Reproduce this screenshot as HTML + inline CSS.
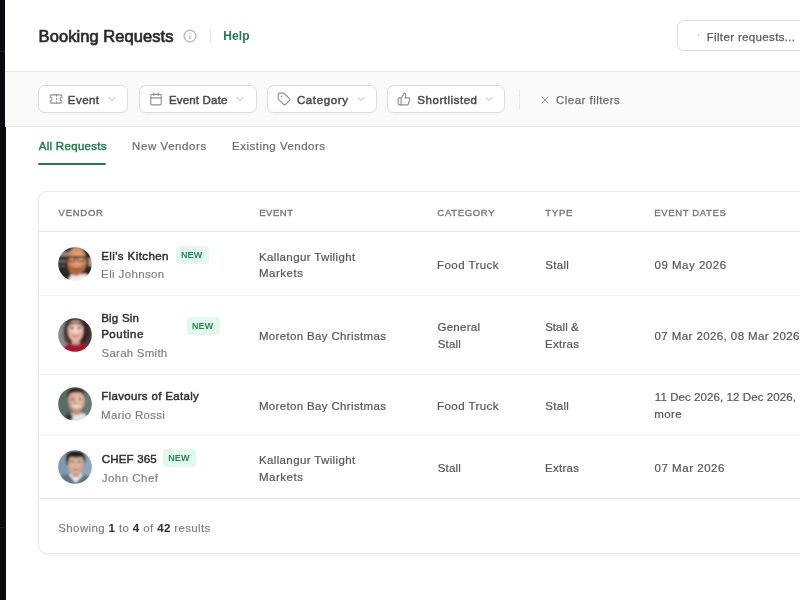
<!DOCTYPE html>
<html lang="en">
<head>
<meta charset="utf-8">
<title>Booking Requests</title>
<style>
*{box-sizing:border-box;margin:0;padding:0}
html,body{width:800px;height:600px;overflow:hidden;background:#fff}
body{font-family:"Liberation Sans",sans-serif;color:#333;position:relative}
.abs,.t{position:absolute;white-space:nowrap}
.t b{color:#2e2e2e}
#tl{position:absolute;left:0;top:0;width:800px;height:600px;will-change:transform}
.side{position:absolute;left:0;top:0;width:5.5px;height:600px;background:#0b0b0d}
.hdr{position:absolute;left:5px;top:0;width:795px;height:72px;background:#fff;border-bottom:1px solid #e7e7e7}
.fbar{position:absolute;left:5px;top:72px;width:795px;height:55px;background:#fafafa;border-bottom:1px solid #e9e9e9}
.btn{position:absolute;top:85px;height:28px;background:#fff;border:1px solid #dedede;border-radius:7px;box-shadow:0 1px 2px rgba(0,0,0,.04)}
.card{position:absolute;left:38px;top:191px;width:800px;height:363px;border:1px solid #e9e9e9;border-radius:9px;background:#fff;box-shadow:0 1px 2px rgba(0,0,0,.03)}
.hl{position:absolute;left:39px;width:761px;height:1px;background:#f3f3f3}
.new{position:absolute;height:18px;width:33px;border-radius:4px;background:#e4f9ed}
.av{position:absolute;left:58px;width:34px;height:34px;border-radius:50%;overflow:hidden}
svg{position:absolute;overflow:visible}
.ic{fill:none;stroke:#8e8e8e;stroke-width:1.9;stroke-linecap:round;stroke-linejoin:round}
.ch{fill:none;stroke:#b4b4b4;stroke-width:2;stroke-linecap:round;stroke-linejoin:round}
</style>
</head>
<body>
<div class="side"></div>
<div class="abs" style="left:0;top:51px;width:5px;height:1px;background:#1d1d20"></div>
<div class="abs" style="left:0;top:527px;width:5px;height:1px;background:#1d1d20"></div>
<div class="hdr"></div>
<div class="fbar"></div>

<!-- header icons -->
<svg style="left:182.5px;top:28.5px" width="14" height="14" viewBox="0 0 14 14"><circle cx="7" cy="7" r="5.9" fill="none" stroke="#b3b3b3" stroke-width="1.2"/><rect x="6.4" y="6.3" width="1.2" height="3.6" rx=".5" fill="#b3b3b3"/><circle cx="7" cy="4.4" r=".75" fill="#b3b3b3"/></svg>
<div class="abs" style="left:209.5px;top:28.5px;width:1px;height:13px;background:#e4e4e4"></div>
<div class="abs" style="left:677px;top:20px;width:140px;height:31px;border:1px solid #dcdcdc;border-radius:7px;background:#fff;box-shadow:0 1px 2px rgba(0,0,0,.03)"></div>
<div class="abs" style="left:697.5px;top:34px;width:1.5px;height:1.5px;border-radius:50%;background:#bbb"></div>

<!-- filter buttons -->
<div class="btn" style="left:38px;width:90px"></div>
<div class="btn" style="left:138.5px;width:118px"></div>
<div class="btn" style="left:267px;width:109.5px"></div>
<div class="btn" style="left:387px;width:118px"></div>
<div class="abs" style="left:519px;top:89px;width:1px;height:20px;background:#e9e9e9"></div>

<!-- ticket -->
<svg style="left:48.8px;top:92.2px" width="14" height="14" viewBox="0 0 24 24"><path class="ic" d="M2 9a3 3 0 0 1 0 6v2a2 2 0 0 0 2 2h16a2 2 0 0 0 2-2v-2a3 3 0 0 1 0-6V7a2 2 0 0 0-2-2H4a2 2 0 0 0-2 2Z"/><path class="ic" d="M13 5v2M13 17v2M13 11v2"/></svg>
<!-- calendar -->
<svg style="left:148.9px;top:92px" width="14" height="14" viewBox="0 0 24 24"><path class="ic" d="M8 2v4M16 2v4M3 10h18"/><rect class="ic" x="3" y="4" width="18" height="18" rx="2"/></svg>
<!-- tag -->
<svg style="left:277.3px;top:92px" width="14" height="14" viewBox="0 0 24 24"><path class="ic" d="M12.586 2.586A2 2 0 0 0 11.172 2H4a2 2 0 0 0-2 2v7.172a2 2 0 0 0 .586 1.414l8.704 8.704a2.426 2.426 0 0 0 3.42 0l6.58-6.58a2.426 2.426 0 0 0 0-3.42z"/><circle cx="7.5" cy="7.5" r="1" fill="#8e8e8e" stroke="#8e8e8e" stroke-width=".6"/></svg>
<!-- thumbs up -->
<svg style="left:396.9px;top:92px" width="14" height="14" viewBox="0 0 24 24"><path class="ic" d="M7 10v12M15 5.88 14 10h5.830a2 2 0 0 1 1.920 2.560l-2.330 8A2 2 0 0 1 17.500 22H4a2 2 0 0 1-2-2v-8a2 2 0 0 1 2-2h2.760a2 2 0 0 0 1.790-1.110L12 2a3.130 3.130 0 0 1 3 3.880Z"/></svg>
<!-- chevrons -->
<svg style="left:105.9px;top:92.7px" width="12" height="12" viewBox="0 0 24 24"><path class="ch" d="m6 9 6 6 6-6"/></svg>
<svg style="left:234.3px;top:92.7px" width="12" height="12" viewBox="0 0 24 24"><path class="ch" d="m6 9 6 6 6-6"/></svg>
<svg style="left:354.9px;top:92.7px" width="12" height="12" viewBox="0 0 24 24"><path class="ch" d="m6 9 6 6 6-6"/></svg>
<svg style="left:483px;top:92.7px" width="12" height="12" viewBox="0 0 24 24"><path class="ch" d="m6 9 6 6 6-6"/></svg>
<!-- x -->
<svg style="left:539.25px;top:93.5px" width="12" height="12" viewBox="0 0 24 24"><path d="M18 6 6 18M6 6l12 12" fill="none" stroke="#949494" stroke-width="2" stroke-linecap="round"/></svg>

<!-- tabs underline -->
<div class="abs" style="left:38px;top:163px;width:68px;height:2px;background:#27794b;border-radius:1px"></div>

<!-- table -->
<div class="card"></div>
<div class="hl" style="top:231px;background:#e6e6e6"></div>
<div class="hl" style="top:295px"></div>
<div class="hl" style="top:374px"></div>
<div class="hl" style="top:435px"></div>
<div class="hl" style="top:498px;background:#e6e6e6"></div>

<!-- badges -->
<div class="new" style="left:175.5px;top:246px"></div>
<div class="new" style="left:186.5px;top:316.5px"></div>
<div class="new" style="left:163px;top:449px"></div>

<svg width="0" height="0" style="left:0;top:0"><defs>
<filter id="bl" x="-10%" y="-10%" width="120%" height="120%"><feGaussianBlur stdDeviation=".8"/></filter>
<clipPath id="cc"><circle cx="17" cy="17" r="16.8"/></clipPath>
<radialGradient id="f1" cx=".55" cy=".4" r=".65"><stop offset="0" stop-color="#e8ae88"/><stop offset=".65" stop-color="#d68a60"/><stop offset="1" stop-color="#a9633d"/></radialGradient>
<radialGradient id="f2" cx=".5" cy=".45" r=".6"><stop offset="0" stop-color="#f3d5c6"/><stop offset=".75" stop-color="#e6bba9"/><stop offset="1" stop-color="#c49482"/></radialGradient>
<radialGradient id="f3" cx=".58" cy=".45" r=".62"><stop offset="0" stop-color="#e8c4ab"/><stop offset=".7" stop-color="#d6ab91"/><stop offset="1" stop-color="#9f7a66"/></radialGradient>
<radialGradient id="f4" cx=".5" cy=".5" r=".6"><stop offset="0" stop-color="#e3beab"/><stop offset=".7" stop-color="#d3a995"/><stop offset="1" stop-color="#a98373"/></radialGradient>
</defs></svg>
<!-- avatar 1 -->
<svg style="left:58.2px;top:246.6px" width="34" height="34" viewBox="0 0 34 34"><g clip-path="url(#cc)"><g filter="url(#bl)">
<rect x="-2" y="-2" width="38" height="38" fill="#262b27"/>
<rect x="-2" y="4.500" width="13" height="5" fill="#858a85"/>
<rect x="-2" y="13" width="10" height="2.500" fill="#6a6f6a"/>
<rect x="-2" y="18" width="9" height="2" fill="#4a4f4b"/>
<rect x="30.500" y="11" width="5" height="8" fill="#b8a09a"/>
<path d="M9 36 L13 27.500 L28 27 L34 31 L34 36Z" fill="#eeedea"/>
<ellipse cx="18.800" cy="14" rx="9.600" ry="14.200" fill="url(#f1)"/>
<path d="M10 16.500 Q10.500 28.500 18 29 Q25.500 28.500 26.500 16.500 Q22.500 21 18.500 20.500 Q14 21 10 16.500Z" fill="#b4683c"/>
<path d="M14.500 21.800 Q18.300 23.300 22 21.800" stroke="#8a4a2a" stroke-width="1" fill="none"/>
<rect x="8" y="9.200" width="20.500" height="1.700" fill="#2a1c16"/>
<rect x="10.300" y="10" width="6.800" height="4.200" rx="1.500" fill="none" stroke="#35251c" stroke-width="1.100"/>
<rect x="19.500" y="10" width="6.800" height="4.200" rx="1.500" fill="none" stroke="#35251c" stroke-width="1.100"/>
</g></g></svg>
<!-- avatar 2 -->
<svg style="left:58.2px;top:317.600px" width="34" height="34" viewBox="0 0 34 34"><g clip-path="url(#cc)"><g filter="url(#bl)">
<rect x="-2" y="-2" width="38" height="38" fill="#8d8c8b"/>
<rect x="24" y="-2" width="12" height="38" fill="#4a3b37"/>
<ellipse cx="18.500" cy="13" rx="13" ry="15.500" fill="#35252a"/>
<ellipse cx="9" cy="16" rx="3.500" ry="9" fill="#4a3a3a"/>
<path d="M4 36 Q5 26 12 25.500 L24 25.500 Q30 26 31 36Z" fill="#a5152d"/>
<rect x="14" y="21" width="7.500" height="5.500" fill="#d8a997"/>
<path d="M10 12 Q9.500 2.500 17.600 2.500 Q25.500 2.500 25.300 12 Q25 19.500 21 23 Q17.600 25.500 14.500 23 Q10.300 19.500 10 12Z" fill="url(#f2)"/>
<path d="M10 9 Q12 3 18 4.500 Q23 3 25.300 9 Q22 5.500 17.600 6 Q13 5.500 10 9Z" fill="#5a3d38"/>
<ellipse cx="14" cy="10" rx="1.800" ry=".9" fill="#2e2022"/>
<ellipse cx="21.300" cy="10" rx="1.800" ry=".9" fill="#2e2022"/>
<path d="M12.500 15.800 Q17.600 23 22.800 15.800 Q17.600 18 12.500 15.800Z" fill="#bf2437"/>
<path d="M13.800 16.700 Q17.600 18.300 21.500 16.700 Q17.600 20 13.800 16.700Z" fill="#f7efee"/>
</g></g></svg>
<!-- avatar 3 -->
<svg style="left:58.2px;top:387.400px" width="34" height="34" viewBox="0 0 34 34"><g clip-path="url(#cc)"><g filter="url(#bl)">
<rect x="-2" y="-2" width="38" height="38" fill="#586b65"/>
<rect x="26" y="-2" width="10" height="38" fill="#667a73"/>
<path d="M5 36 Q7 27 13 26 L24 26 Q30 27 31 36Z" fill="#dfe5ea"/>
<path d="M4 36 Q6 27 12.500 25.500 L15 30 L12 36Z" fill="#33373d"/>
<rect x="14.500" y="22" width="7.500" height="6" fill="#c0957d"/>
<path d="M10 13 Q9.500 3 18.200 3 Q27 3 26.600 13 Q26.300 21 22 24.500 Q18.200 27 14.500 24.500 Q10.300 21 10 13Z" fill="url(#f3)"/>
<path d="M9.300 12 Q8 .8 18 .8 Q28 .8 27.200 12 Q26 6.500 22 5.500 Q18 4.800 14 5.800 Q10.500 7 9.300 12Z" fill="#2f241f"/>
<ellipse cx="14.600" cy="12.200" rx="1.700" ry=".8" fill="#3f3029"/>
<ellipse cx="22" cy="12.200" rx="1.700" ry=".8" fill="#3f3029"/>
<path d="M17.500 13 L17 16.500 L19.500 16.500" stroke="#b58a72" stroke-width=".8" fill="none"/>
<path d="M13.500 18 Q18.200 23 23.200 18 Q18.200 19.500 13.500 18Z" fill="#f6f1f0"/>
<path d="M12.500 21.500 Q18 27 24.500 21.500 Q18 25 12.500 21.500Z" fill="#a97f69"/>
</g></g></svg>
<!-- avatar 4 -->
<svg style="left:58.2px;top:450.200px" width="34" height="34" viewBox="0 0 34 34"><g clip-path="url(#cc)"><g filter="url(#bl)">
<rect x="-2" y="-2" width="38" height="38" fill="#8da6b8"/>
<rect x="-2" y="-2" width="12" height="38" fill="#7f9aae"/>
<path d="M-2 36 L-2 29 Q6 24 12 24 L24 24 Q30 25 36 30 L36 36Z" fill="#5f7485"/>
<path d="M11 25 L17.800 33 L25 25 L22 23 L14 23Z" fill="#e8ecf0"/>
<rect x="14.300" y="21" width="7.200" height="6" fill="#c29684"/>
<path d="M10.200 13 Q9.800 3.500 17.800 3.500 Q25.800 3.500 25.500 13 Q25.200 20.500 21.500 24 Q17.800 26.500 14.300 24 Q10.500 20.500 10.200 13Z" fill="url(#f4)"/>
<path d="M8.500 14.500 Q5 .8 17 .8 Q29.500 .3 27.300 14 Q26.500 9.500 24 6.800 Q18 8.300 12.500 6.800 Q10 9 9.800 15Z" fill="#221b1b"/>
<ellipse cx="14.300" cy="11.500" rx="1.900" ry=".8" fill="#4a362e"/>
<ellipse cx="21.300" cy="11.500" rx="1.900" ry=".8" fill="#4a362e"/>
<path d="M17.500 12.500 L17.200 16 L19 16" stroke="#b48a78" stroke-width=".8" fill="none"/>
<path d="M14.800 19 Q17.800 20.500 21 19" stroke="#9c5f55" stroke-width="1.100" fill="none"/>
</g></g></svg>


<div id="tl">
<div class="t" id="title" style="left:38.58px;top:24.88px;font-size:16.5px;line-height:22px;color:#2b2b2b;letter-spacing:0.067px;-webkit-text-stroke:.7px #2b2b2b;">Booking Requests</div>
<div class="t" id="help" style="left:223.21px;top:28.34px;font-size:12px;line-height:16px;color:#1f7d49;font-weight:bold;letter-spacing:0.099px;">Help</div>
<div class="t" id="filt" style="left:706.70px;top:30.02px;font-size:11.5px;line-height:15px;color:#5a5a5a;letter-spacing:0.349px;-webkit-text-stroke:.25px #5a5a5a;">Filter requests...</div>
<div class="t" id="b1" style="left:67.87px;top:92.52px;font-size:11.5px;line-height:15px;color:#484848;letter-spacing:0.433px;-webkit-text-stroke:.45px #484848;">Event</div>
<div class="t" id="b2" style="left:168.92px;top:92.52px;font-size:11.5px;line-height:15px;color:#484848;letter-spacing:0.181px;-webkit-text-stroke:.45px #484848;">Event Date</div>
<div class="t" id="b3" style="left:296.89px;top:92.52px;font-size:11.5px;line-height:15px;color:#484848;letter-spacing:0.632px;-webkit-text-stroke:.45px #484848;">Category</div>
<div class="t" id="b4" style="left:417.32px;top:92.52px;font-size:11.5px;line-height:15px;color:#484848;letter-spacing:0.536px;-webkit-text-stroke:.45px #484848;">Shortlisted</div>
<div class="t" id="clear" style="left:556.07px;top:92.52px;font-size:11.5px;line-height:15px;color:#6a6a6a;letter-spacing:0.462px;-webkit-text-stroke:.25px #6a6a6a;">Clear filters</div>
<div class="t" id="tab1" style="left:38.66px;top:139.02px;font-size:11.5px;line-height:15px;color:#1f7d49;letter-spacing:0.307px;-webkit-text-stroke:.45px #1f7d49;">All Requests</div>
<div class="t" id="tab2" style="left:132.05px;top:139.02px;font-size:11.5px;line-height:15px;color:#6a6a6a;letter-spacing:0.570px;-webkit-text-stroke:.2px #6a6a6a;">New Vendors</div>
<div class="t" id="tab3" style="left:232.05px;top:139.02px;font-size:11.5px;line-height:15px;color:#6a6a6a;letter-spacing:0.490px;-webkit-text-stroke:.2px #6a6a6a;">Existing Vendors</div>
<div class="t" id="h1" style="left:58.59px;top:205.91px;font-size:9.5px;line-height:13px;color:#767676;letter-spacing:0.727px;-webkit-text-stroke:.35px #767676;">VENDOR</div>
<div class="t" id="h2" style="left:259.18px;top:205.91px;font-size:9.5px;line-height:13px;color:#767676;letter-spacing:0.564px;-webkit-text-stroke:.35px #767676;">EVENT</div>
<div class="t" id="h3" style="left:437.36px;top:205.91px;font-size:9.5px;line-height:13px;color:#767676;letter-spacing:0.668px;-webkit-text-stroke:.35px #767676;">CATEGORY</div>
<div class="t" id="h4" style="left:545.25px;top:205.91px;font-size:9.5px;line-height:13px;color:#767676;letter-spacing:0.757px;-webkit-text-stroke:.35px #767676;">TYPE</div>
<div class="t" id="h5" style="left:654.18px;top:205.91px;font-size:9.5px;line-height:13px;color:#767676;letter-spacing:0.655px;-webkit-text-stroke:.35px #767676;">EVENT DATES</div>
<div class="t" id="r1n" style="left:101.18px;top:248.52px;font-size:11.5px;line-height:15px;color:#303030;letter-spacing:0.416px;-webkit-text-stroke:.45px #303030;">Eli's Kitchen</div>
<div class="t" id="r1s" style="left:101.12px;top:267.27px;font-size:11.5px;line-height:15px;color:#7c7c7c;letter-spacing:0.362px;-webkit-text-stroke:.15px #7c7c7c;">Eli Johnson</div>
<div class="t" id="r1e1" style="left:258.96px;top:249.77px;font-size:11.5px;line-height:15px;color:#555;letter-spacing:0.369px;-webkit-text-stroke:.2px #555;">Kallangur Twilight</div>
<div class="t" id="r1e2" style="left:258.96px;top:265.52px;font-size:11.5px;line-height:15px;color:#555;letter-spacing:0.520px;-webkit-text-stroke:.2px #555;">Markets</div>
<div class="t" id="r1c" style="left:437.05px;top:257.77px;font-size:11.5px;line-height:15px;color:#555;letter-spacing:0.430px;-webkit-text-stroke:.2px #555;">Food Truck</div>
<div class="t" id="r1t" style="left:545.16px;top:257.77px;font-size:11.5px;line-height:15px;color:#555;letter-spacing:0.345px;-webkit-text-stroke:.2px #555;">Stall</div>
<div class="t" id="r1d" style="left:654.54px;top:257.77px;font-size:11.5px;line-height:15px;color:#555;letter-spacing:0.503px;-webkit-text-stroke:.2px #555;">09 May 2026</div>
<div class="t" id="r2n1" style="left:101.18px;top:311.02px;font-size:11.5px;line-height:15px;color:#303030;letter-spacing:0.228px;-webkit-text-stroke:.45px #303030;">Big Sin</div>
<div class="t" id="r2n2" style="left:101.18px;top:327.27px;font-size:11.5px;line-height:15px;color:#303030;letter-spacing:0.524px;-webkit-text-stroke:.45px #303030;">Poutine</div>
<div class="t" id="r2s" style="left:101.59px;top:346.02px;font-size:11.5px;line-height:15px;color:#7c7c7c;letter-spacing:0.235px;-webkit-text-stroke:.15px #7c7c7c;">Sarah Smith</div>
<div class="t" id="r2e" style="left:258.96px;top:328.52px;font-size:11.5px;line-height:15px;color:#555;letter-spacing:0.341px;-webkit-text-stroke:.2px #555;">Moreton Bay Christmas</div>
<div class="t" id="r2c1" style="left:437.42px;top:320.27px;font-size:11.5px;line-height:15px;color:#555;letter-spacing:0.284px;-webkit-text-stroke:.2px #555;">General</div>
<div class="t" id="r2c2" style="left:437.77px;top:336.52px;font-size:11.5px;line-height:15px;color:#555;letter-spacing:0.156px;-webkit-text-stroke:.2px #555;">Stall</div>
<div class="t" id="r2t1" style="left:545.16px;top:320.27px;font-size:11.5px;line-height:15px;color:#555;letter-spacing:0.041px;-webkit-text-stroke:.2px #555;">Stall &amp;</div>
<div class="t" id="r2t2" style="left:544.96px;top:336.52px;font-size:11.5px;line-height:15px;color:#555;letter-spacing:0.270px;-webkit-text-stroke:.2px #555;">Extras</div>
<div class="t" id="r2d" style="left:654.54px;top:328.52px;font-size:11.5px;line-height:15px;color:#555;letter-spacing:0.410px;-webkit-text-stroke:.2px #555;">07 Mar 2026, 08 Mar 2026</div>
<div class="t" id="r3n" style="left:101.18px;top:389.27px;font-size:11.5px;line-height:15px;color:#303030;letter-spacing:0.332px;-webkit-text-stroke:.45px #303030;">Flavours of Eataly</div>
<div class="t" id="r3s" style="left:101.12px;top:407.77px;font-size:11.5px;line-height:15px;color:#7c7c7c;letter-spacing:0.307px;-webkit-text-stroke:.15px #7c7c7c;">Mario Rossi</div>
<div class="t" id="r3e" style="left:258.96px;top:399.02px;font-size:11.5px;line-height:15px;color:#555;letter-spacing:0.341px;-webkit-text-stroke:.2px #555;">Moreton Bay Christmas</div>
<div class="t" id="r3c" style="left:437.05px;top:399.02px;font-size:11.5px;line-height:15px;color:#555;letter-spacing:0.430px;-webkit-text-stroke:.2px #555;">Food Truck</div>
<div class="t" id="r3t" style="left:545.16px;top:399.02px;font-size:11.5px;line-height:15px;color:#555;letter-spacing:0.345px;-webkit-text-stroke:.2px #555;">Stall</div>
<div class="t" id="r3d1" style="left:654.75px;top:390.02px;font-size:11.5px;line-height:15px;color:#555;letter-spacing:0.084px;-webkit-text-stroke:.2px #555;">11 Dec 2026, 12 Dec 2026,</div>
<div class="t" id="r3d2" style="left:654.24px;top:406.52px;font-size:11.5px;line-height:15px;color:#555;letter-spacing:0.391px;-webkit-text-stroke:.2px #555;">more</div>
<div class="t" id="r4n" style="left:101.73px;top:452.27px;font-size:11.5px;line-height:15px;color:#303030;letter-spacing:0.191px;-webkit-text-stroke:.45px #303030;">CHEF 365</div>
<div class="t" id="r4s" style="left:101.75px;top:471.02px;font-size:11.5px;line-height:15px;color:#7c7c7c;letter-spacing:0.481px;-webkit-text-stroke:.15px #7c7c7c;">John Chef</div>
<div class="t" id="r4e1" style="left:258.96px;top:452.52px;font-size:11.5px;line-height:15px;color:#555;letter-spacing:0.369px;-webkit-text-stroke:.2px #555;">Kallangur Twilight</div>
<div class="t" id="r4e2" style="left:258.96px;top:469.52px;font-size:11.5px;line-height:15px;color:#555;letter-spacing:0.520px;-webkit-text-stroke:.2px #555;">Markets</div>
<div class="t" id="r4c" style="left:437.77px;top:461.02px;font-size:11.5px;line-height:15px;color:#555;letter-spacing:0.156px;-webkit-text-stroke:.2px #555;">Stall</div>
<div class="t" id="r4t" style="left:544.96px;top:461.02px;font-size:11.5px;line-height:15px;color:#555;letter-spacing:0.270px;-webkit-text-stroke:.2px #555;">Extras</div>
<div class="t" id="r4d" style="left:654.54px;top:461.02px;font-size:11.5px;line-height:15px;color:#555;letter-spacing:0.532px;-webkit-text-stroke:.2px #555;">07 Mar 2026</div>
<div class="t" id="foot" style="left:58.30px;top:520.52px;font-size:11.5px;line-height:15px;color:#7c7c7c;letter-spacing:0.373px;-webkit-text-stroke:.15px #7c7c7c;">Showing <b>1</b> to <b>4</b> of <b>42</b> results</div>
<div class="t" id="n1" style="left:180.95px;top:249.18px;font-size:9px;line-height:12px;color:#258a52;font-weight:bold;letter-spacing:0.115px;">NEW</div>
<div class="t" id="n2" style="left:191.95px;top:319.88px;font-size:9px;line-height:12px;color:#258a52;font-weight:bold;letter-spacing:0.115px;">NEW</div>
<div class="t" id="n4" style="left:168.30px;top:452.38px;font-size:9px;line-height:12px;color:#258a52;font-weight:bold;letter-spacing:0.063px;">NEW</div>
</div>
</body>
</html>
